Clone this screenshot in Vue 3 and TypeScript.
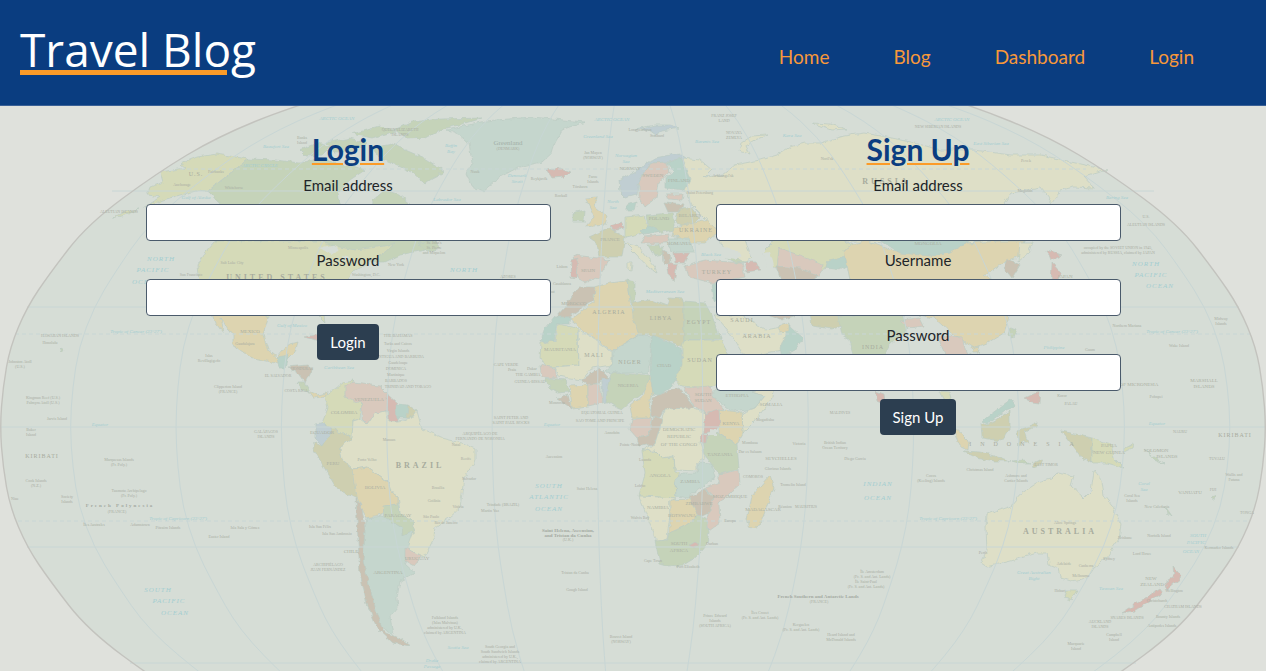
<script setup lang="ts">
import { ref } from 'vue'

interface Field {
  id: string
  label: string
  type: string
}

interface AuthForm {
  title: string
  action: string
  fields: Field[]
}

const links = ['Home', 'Blog', 'Dashboard', 'Login']

const forms: AuthForm[] = [
  {
    title: 'Login',
    action: 'Login',
    fields: [
      { id: 'login-email', label: 'Email address', type: 'email' },
      { id: 'login-password', label: 'Password', type: 'password' },
    ],
  },
  {
    title: 'Sign Up',
    action: 'Sign Up',
    fields: [
      { id: 'signup-email', label: 'Email address', type: 'email' },
      { id: 'signup-username', label: 'Username', type: 'text' },
      { id: 'signup-password', label: 'Password', type: 'password' },
    ],
  },
]

const values = ref<Record<string, string>>({})

// Half-width of the globe at a given distance from the equator.
const profile: [number, number][] = [
  [0, 633], [40, 630], [80, 623], [120, 606], [154, 583], [203, 545],
  [254, 476], [290, 416], [321, 340], [345, 260],
]
const equator = 427
const middle = 633

function edge(ratio: number): [number, number][] {
  const north = profile.map(([d, w]): [number, number] => [middle + ratio * w, equator - d])
  const south = profile.slice(1).map(([d, w]): [number, number] => [middle + ratio * w, equator + d])
  return [...north.reverse(), ...south]
}

// Smooth line through a list of points, using quadratic midpoints.
function smooth(points: [number, number][]): string {
  let d = `M${points[0][0]} ${points[0][1]}`
  for (let i = 1; i < points.length - 1; i++) {
    const [x, y] = points[i]
    const [nx, ny] = points[i + 1]
    d += `Q${x} ${y} ${(x + nx) / 2} ${(y + ny) / 2}`
  }
  const last = points[points.length - 1]
  return d + `L${last[0]} ${last[1]}`
}

const globe = smooth(edge(-1)) + smooth(edge(1).reverse()).replace('M', 'L') + 'Z'
const meridians = Array.from({ length: 12 }, (_, k) => smooth(edge((70 + k * 105.5 - middle) / middle)))

const green = '#c5d3b9'
const lime = '#d5dab8'
const cream = '#dedfc7'
const sand = '#ddd4b0'
const pink = '#d9c9bd'
const teal = '#b9d2c8'
const mist = '#c5d6cd'
const brown = '#cac2b3'
const olive = '#cecfb0'
const red = '#d6bab2'
const blue = '#c0ced2'

const lands: [string, string][] = [
  [lime, '180,164 197,157 217,154 248,159 208,191 222,203 216,200 210,192 200,190 180,195 163,200 143,208 160,197 147,195 150,187 163,182 160,172 173,170 185,168'],
  [lime, '140,209 128,214 112,218 124,212'],
  [green, '248,159 275,160 300,163 320,158 335,163 350,165 365,170 350,180 338,192 340,205 355,212 362,222 372,215 373,200 385,190 400,195 412,205 425,220 430,235 438,243 425,250 400,255 385,262 365,262 345,250 320,243 217,243 213,228 215,215 220,204 208,191'],
  [green, '300,150 318,143 330,147 322,155 306,156'],
  [green, '326,143 350,138 366,143 352,152 334,152'],
  [green, '352,134 380,126 396,131 372,138'],
  [green, '395,130 412,122 440,119 482,118 462,124 440,130 425,138 408,139'],
  [green, '372,148 392,144 410,152 424,158 440,168 445,172 430,180 425,184 412,172 396,165 380,158'],
  [green, '418,243 436,241 440,248 428,252'],
  [mist, '447,130 485,121 532,117 585,122 562,130 555,143 552,153 542,162 519,167 500,177 482,192 472,187 466,173 472,163 469,143 459,135'],
  [red, '547,170 560,168 570,172 565,177 552,178'],
  [lime, '215,241 320,241 335,246 355,250 385,246 395,243 385,252 370,262 352,272 348,282 335,297 322,305 325,322 318,315 305,305 285,305 268,318 255,310 235,305 207,303 200,285 198,265 205,252'],
  [sand, '208,304 235,305 255,310 268,318 263,335 268,350 277,357 287,345 298,342 295,352 285,362 275,363 250,357 233,345 233,335 220,318 223,333 215,322'],
  [teal, '277,357 289,355 286,368 279,368'],
  [brown, '288,367 308,365 312,368 305,383 297,372'],
  [green, '297,382 304,382 310,391 303,390'],
  [sand, '309,391 318,395 326,393 327,397 314,398'],
  [red, '303,337 317,335 335,343 325,342 312,339'],
  [green, '338,346 349,345 358,349 346,350'],
  [lime, '343,383 353,381 345,394 362,404 360,419 353,421 352,438 333,428 322,423 328,408 325,396'],
  [pink, '345,386 353,383 380,386 388,394 387,411 375,413 367,424 362,419 362,404 345,397'],
  [red, '387,394 397,403 397,421 388,421'],
  [teal, '396,404 408,405 407,418 397,418'],
  [olive, '408,405 417,411 412,418 407,418'],
  [blue, '315,424 322,423 333,428 322,446 315,439'],
  [olive, '333,428 352,438 340,448 342,459 353,469 358,478 357,499 337,489 328,474 313,448 315,443 322,446'],
  [cream, '353,421 360,419 367,424 375,413 387,411 388,421 397,421 412,418 417,411 422,429 442,438 462,443 475,449 475,461 464,478 460,508 449,518 435,528 434,538 424,558 405,548 413,531 413,521 400,513 398,496 390,491 387,481 368,467 353,469 342,459 340,448 352,438'],
  [sand, '353,469 368,467 387,481 390,491 398,496 398,504 385,506 383,514 367,518 357,498'],
  [green, '383,506 398,504 400,513 413,521 415,533 402,537 402,528 385,518'],
  [mist, '367,518 383,516 402,528 402,536 413,531 407,548 405,564 415,573 400,581 397,598 398,608 390,618 393,634 377,626 370,594 363,561 365,528'],
  [brown, '356,498 362,508 365,528 363,561 370,588 377,614 383,631 400,639 410,646 393,643 377,628 367,604 360,574 358,541'],
  [pink, '405,548 422,556 414,566 405,561'],
  [brown, '579,287 595,287 594,300 569,317 555,318 565,307 572,295'],
  [teal, '555,317 570,317 569,324 557,324 554,341 541,342 544,330'],
  [sand, '595,287 609,283 627,281 629,297 633,313 639,335 612,351 570,320 594,302'],
  [green, '627,280 635,282 635,297 633,305 629,297'],
  [olive, '633,303 650,300 667,306 669,298 684,299 684,347 652,335 639,335 633,318'],
  [green, '684,301 705,303 712,316 721,339 684,340'],
  [lime, '558,324 577,328 579,365 547,367 540,357 541,343 555,341'],
  [cream, '578,328 612,352 612,365 592,368 582,380 569,378 559,376 555,367 579,365'],
  [mist, '613,351 639,335 652,337 650,363 647,373 615,373 604,372 612,365'],
  [teal, '652,335 681,348 682,367 672,387 660,395 652,394 650,370'],
  [lime, '684,340 721,340 730,357 716,385 705,388 682,386 675,380 682,365 682,347'],
  [pink, '540,365 555,368 557,378 542,377'],
  [green, '545,378 566,380 569,392 557,393 550,388'],
  [brown, '582,380 599,368 609,378 589,386'],
  [sand, '570,386 588,385 588,406 572,408'],
  [brown, '557,398 568,394 572,409'],
  [pink, '588,384 599,384 602,403 588,406'],
  [blue, '602,378 610,378 606,402 602,403'],
  [green, '611,373 649,375 649,388 640,395 630,403 622,410 617,408 606,401 608,385'],
  [sand, '650,376 653,394 649,401 652,418 632,418 630,406 644,394'],
  [brown, '652,398 669,391 679,388 694,406 692,409 664,409 659,418 652,416'],
  [pink, '684,388 709,386 715,398 724,409 705,413 694,406'],
  [mist, '715,392 730,378 745,382 752,392 765,396 755,408 742,411 730,410 714,397'],
  [teal, '730,366 742,372 750,382 742,381 730,378'],
  [cream, '752,392 774,384 772,398 755,421 743,433 742,413 755,408 765,396'],
  [sand, '719,409 742,413 743,433 737,444 719,433'],
  [red, '705,413 719,409 720,425 715,431 703,433'],
  [pink, '632,419 652,418 649,434 637,438 630,430'],
  [brown, '654,416 662,419 655,444 639,446 637,438 649,434'],
  [cream, '664,409 692,408 705,413 704,431 700,444 705,458 697,463 697,471 675,470 674,456 662,458 654,450 642,450 655,444 660,428'],
  [lime, '642,450 655,451 662,458 674,457 675,472 680,473 675,481 676,498 639,496 645,474'],
  [mist, '675,479 682,473 697,473 699,463 712,464 715,478 695,491 689,498 676,496'],
  [green, '707,436 719,433 737,444 739,469 719,474 704,454 702,441'],
  [red, '702,434 707,434 706,443 700,443'],
  [pink, '719,474 739,470 740,484 719,503 720,523 709,531 707,518 712,494 704,489 719,483'],
  [brown, '689,498 704,489 713,496 711,511 700,516 690,508'],
  [cream, '639,496 677,498 670,501 670,514 667,539 657,542 649,521'],
  [sand, '670,500 689,499 699,516 685,526 670,534'],
  [green, '655,541 667,540 669,533 685,526 699,516 706,518 709,533 707,544 695,558 685,564 667,565 660,563'],
  [red, '690,545 695,542 699,544 694,548'],
  [sand, '770,476 774,488 759,526 750,528 747,519 752,496'],
  [blue, '619,180 635,172 655,158 679,153 685,157 669,162 652,163 639,180 637,195 625,198 620,193'],
  [pink, '639,180 652,163 667,162 669,172 659,183 657,197 645,207 639,197'],
  [teal, '667,163 682,158 690,182 685,190 665,188 665,178 674,172'],
  [blue, '635,129 655,125 669,125 679,128 662,131 655,135 648,130'],
  [sand, '585,198 597,197 595,207 607,217 605,225 585,227 594,217'],
  [green, '572,213 585,210 584,222 572,222'],
  [teal, '627,204 637,201 635,211 627,211'],
  [olive, '589,237 609,228 625,237 622,257 599,257 597,243'],
  [pink, '574,255 599,258 609,260 599,277 585,282 577,278'],
  [red, '572,260 578,258 576,278 571,277'],
  [lime, '625,217 645,215 649,232 625,237'],
  [red, '610,226 622,222 624,228 614,231'],
  [green, '647,215 672,213 675,230 655,233 649,227'],
  [teal, '640,230 655,225 660,232 645,235'],
  [pink, '644,237 670,234 666,243 640,243'],
  [brown, '664,203 684,205 682,212 668,212'],
  [pink, '666,194 683,194 682,200 668,199'],
  [olive, '679,210 692,207 700,218 689,227 675,223'],
  [sand, '674,227 709,220 717,233 705,243 689,243 672,235'],
  [mist, '667,238 689,238 694,252 672,252'],
  [red, '674,253 690,253 685,263 675,263'],
  [green, '648,245 660,244 664,254 654,256'],
  [brown, '662,250 670,254 671,265 663,262'],
  [red, '667,263 677,265 674,282 669,275'],
  [cream, '625,243 639,247 655,267 657,273 649,268 635,253'],
  [cream, '628,262 632,262 631,272 628,271'],
  [pink, '685,265 705,260 742,263 745,277 712,283 689,277'],
  [green, '726,257 742,257 748,262 736,263'],
  [red, '744,262 756,262 760,270 746,272'],
  [teal, '712,284 722,281 724,300 714,300'],
  [cream, '682,158 700,160 712,170 705,177 722,175 735,165 760,160 777,155 790,147 805,143 820,143 844,136 864,133 887,137 911,142 941,150 974,150 1011,155 1041,155 1071,162 1107,170 1084,177 1094,188 1074,187 1061,190 1052,203 1041,188 1011,193 1004,203 1020,225 1017,241 980,243 900,243 850,242 800,240 765,237 745,240 752,258 745,262 722,250 717,232 705,218 692,205 685,190 690,180'],
  [cream, '739,151 741,143 752,136 768,135 756,140 746,146 750,154'],
  [cream, '812,123 830,124 846,129 832,130'],
  [lime, '762,253 775,240 800,238 844,240 860,250 850,262 820,270 790,262 775,268'],
  [pink, '779,248 800,255 822,265 820,277 790,280 777,270'],
  [brown, '776,266 800,268 818,276 808,284 782,284'],
  [teal, '828,260 846,256 854,262 840,270 826,268'],
  [brown, '745,280 775,284 806,284 806,312 782,320 760,310'],
  [cream, '714,315 742,315 765,330 790,325 782,350 745,357 735,340'],
  [teal, '789,325 803,338 795,350 782,357 780,348'],
  [sand, '778,326 789,323 789,331 780,332'],
  [olive, '810,312 842,312 846,324 832,329 812,326'],
  [green, '838,316 900,312 910,327 890,345 880,362 874,385 864,388 856,362 850,340 842,335'],
  [sand, '844,250 865,240 890,250 930,255 967,243 1000,241 1025,241 1020,256 1005,262 992,270 984,275 1000,285 1009,316 1004,333 987,343 974,348 951,333 934,318 900,312 870,300 850,280'],
  [teal, '880,240 972,240 950,252 930,256 900,253'],
  [cream, '1020,243 1032,243 1028,254 1018,262'],
  [brown, '1007,258 1020,265 1012,278 1004,268'],
  [red, '1047,250 1062,255 1051,260'],
  [red, '1052,263 1061,273 1057,282 1051,284'],
  [pink, '900,320 920,318 924,326 908,328'],
  [pink, '937,335 962,337 966,352 980,360 972,370 955,366 944,352'],
  [green, '1011,328 1016,330 1013,338 1009,335'],
  [sand, '972,348 980,346 978,352 973,352'],
  [red, '876,391 884,394 885,403 877,400'],
  [lime, '940,391 950,392 952,399 944,399'],
  [sand, '950,424 962,434 969,441 968,450 960,446'],
  [teal, '982,421 1011,399 1016,406 1004,411 987,424'],
  [olive, '981,423 987,425 1010,411 1010,428 1001,441 982,438'],
  [olive, '964,451 980,452 994,456 1011,461 994,461 976,457'],
  [olive, '1017,431 1037,423 1036,427 1024,431 1029,444 1023,439 1019,448'],
  [olive, '1032,464 1042,459 1039,466 1033,468'],
  [green, '1012,461 1024,460 1030,463 1018,463'],
  [red, '1025,398 1040,391 1039,403 1032,402'],
  [olive, '1061,431 1071,433 1092,438 1092,463 1082,458 1071,443'],
  [lime, '1092,438 1111,444 1114,458 1124,468 1107,463 1092,463'],
  [lime, '1122,450 1133,444 1132,448 1124,452'],
  [green, '1144,449 1152,456 1164,464 1154,460'],
  [green, '1165,506 1172,516 1168,513'],
  [cream, '987,514 1011,506 1022,493 1037,483 1051,479 1057,473 1074,476 1071,486 1084,498 1091,491 1094,471 1102,481 1104,496 1112,506 1121,524 1119,539 1106,558 1094,568 1087,578 1071,581 1061,578 1059,568 1049,564 1047,553 1037,553 1011,561 987,567 981,563 987,551 986,528'],
  [lime, '1066,590 1077,590 1071,600 1064,598'],
  [red, '1173,566 1182,577 1168,589 1165,583 1174,577'],
  [red, '1159,589 1162,593 1134,611 1122,613'],
  [green, '60,347 64,350 62,353'],
  [green, '1211,498 1216,496 1215,501'],
]

type Spot = [number, number, string]

const countries: Spot[] = [
  [250, 333, 'MEXICO'], [369, 401, 'VENEZUELA'], [344, 414, 'COLOMBIA'], [333, 465, 'PERU'],
  [375, 489, 'BOLIVIA'], [398, 517, 'PARAGUAY'], [388, 574, 'ARGENTINA'], [351, 553, 'CHILE'],
  [417, 560, 'URUGUAY'], [322, 434, 'ECUADOR'], [574, 305, 'MOROCCO'], [560, 351, 'MAURITANIA'],
  [664, 367, 'CHAD'], [628, 387, 'NIGERIA'], [703, 396, 'SOUTH'], [703, 402, 'SUDAN'],
  [737, 397, 'ETHIOPIA'], [771, 406, 'SOMALIA'], [731, 425, 'KENYA'], [679, 431, 'DEMOCRATIC'],
  [679, 438, 'REPUBLIC'], [679, 446, 'OF THE CONGO'], [720, 456, 'TANZANIA'], [660, 477, 'ANGOLA'],
  [690, 483, 'ZAMBIA'], [699, 505, 'ZIMBABWE'], [658, 509, 'NAMIBIA'], [682, 517, 'BOTSWANA'],
  [679, 545, 'SOUTH'], [679, 552, 'AFRICA'], [730, 498, 'MOZAMBIQUE'], [763, 511, 'MADAGASCAR'],
  [781, 460, 'SEYCHELLES'], [588, 272, 'SPAIN'], [610, 241, 'FRANCE'], [653, 177, 'SWEDEN'],
  [630, 170, 'NORWAY'], [679, 182, 'FINLAND'], [659, 220, 'POLAND'], [690, 217, 'BELARUS'],
  [679, 245, 'ROMANIA'], [1065, 278, 'JAPAN'], [1109, 447, 'PAPUA'], [1109, 454, 'NEW GUINEA'],
  [1156, 452, 'SOLOMON'], [1167, 458, 'ISLANDS'], [1190, 494, 'VANUATU'], [1151, 580, 'NEW'],
  [1152, 586, 'ZEALAND'], [928, 245, 'MONGOLIA'], [1139, 386, 'OF MICRONESIA'],
  [1204, 382, 'MARSHALL'], [1204, 388, 'ISLANDS'],
]

const spaced: Spot[] = [
  [609, 314, 'ALGERIA'], [661, 320, 'LIBYA'], [594, 357, 'MALI'], [630, 364, 'NIGER'],
  [700, 362, 'SUDAN'], [696, 232, 'UKRAINE'], [717, 274, 'TURKEY'], [873, 349, 'INDIA'],
  [42, 458, 'KIRIBATI'], [1235, 437, 'KIRIBATI'], [196, 176, 'U.S.'], [699, 324, 'EGYPT'],
  [742, 322, 'SAUDI'], [757, 338, 'ARABIA'],
]

const wide: Spot[] = [
  [277, 280, 'UNITED STATES'], [420, 468, 'BRAZIL'], [886, 184, 'RUSSIA'], [1060, 534, 'AUSTRALIA'],
]

const oceans: Spot[] = [
  [161, 261, 'NORTH'], [153, 272, 'PACIFIC'], [146, 284, 'OCEAN'], [158, 592, 'SOUTH'],
  [169, 603, 'PACIFIC'], [175, 615, 'OCEAN'], [549, 488, 'SOUTH'], [549, 499, 'ATLANTIC'],
  [549, 511, 'OCEAN'], [878, 486, 'INDIAN'], [878, 500, 'OCEAN'], [1146, 266, 'NORTH'],
  [1151, 277, 'PACIFIC'], [1160, 288, 'OCEAN'], [464, 272, 'NORTH'],
]

const seas: Spot[] = [
  [337, 120, 'ARCTIC OCEAN'], [612, 121, 'ARCTIC OCEAN'], [952, 121, 'ARCTIC OCEAN'],
  [276, 148, 'Beaufort Sea'], [451, 147, 'Baffin'], [451, 153, 'Bay'], [598, 138, 'Greenland Sea'],
  [626, 157, 'Norwegian'], [626, 163, 'Sea'], [707, 143, 'Barents Sea'], [792, 137, 'Kara Sea'],
  [991, 145, 'East Siberian Sea'], [1117, 199, 'Bering Sea'], [136, 333, 'Tropic of Cancer (23°27\')'],
  [1172, 333, 'Tropic of Cancer (23°27\')'], [178, 520, 'Tropic of Capricorn (23°27\')'],
  [948, 520, 'Tropic of Capricorn (23°27\')'], [100, 426, 'Equator'], [552, 426, 'Equator'],
  [1157, 425, 'Equator'], [711, 256, 'Black Sea'], [665, 293, 'Mediterranean Sea'],
  [292, 327, 'Gulf of Mexico'], [339, 369, 'Caribbean Sea'], [1054, 349, 'Philippine'],
  [1198, 537, 'SOUTH'], [1196, 544, 'PACIFIC'], [1191, 553, 'OCEAN'], [1034, 574, 'Great Australian'],
  [1034, 580, 'Bight'], [1111, 590, 'Tasman Sea'], [1144, 485, 'Coral'], [1144, 491, 'Sea'],
  [458, 649, 'Scotia Sea'], [432, 662, 'Drake'], [432, 668, 'Passage'], [260, 167, 'ARCTIC CIRCLE'],
  [517, 177, 'Denmark'], [517, 183, 'Strait'], [447, 201, 'Labrador Sea'],
  [196, 199, 'Gulf of Alaska'], [613, 203, 'North'], [613, 209, 'Sea'],
]

const places: Spot[] = [
  [508, 150, '(DENMARK)'], [119, 213, 'ALEUTIAN ISLANDS'], [60, 337, 'HAWAIIAN ISLANDS'],
  [50, 344, 'Honolulu'], [20, 363, 'Johnston Atoll'], [20, 368, '(U.S.)'], [43, 399, 'Kingman Reef (U.S.)'],
  [43, 404, 'Palmyra Atoll (U.S.)'], [57, 420, 'Jarvis Island'], [31, 431, 'Baker'],
  [31, 436, 'Island'], [119, 461, 'Marquesas Islands'], [119, 466, '(Fr. Poly.)'], [36, 482, 'Cook Islands'],
  [36, 487, '(N.Z.)'], [15, 500, 'Niue'], [67, 498, 'Society'], [67, 503, 'Islands'],
  [129, 492, 'Tuamotu Archipelago'], [129, 497, '(Fr. Poly.)'], [117, 513, '(FRANCE)'],
  [94, 526, 'Îles Australes'], [140, 526, 'Adamstown'], [168, 529, 'Pitcairn Islands'],
  [245, 529, 'Isla Sala y Gómez'], [219, 538, 'Easter Island'], [320, 528, 'Isla San Félix'],
  [337, 535, 'Isla San Ambrosio'], [228, 388, 'Clipperton Island'], [228, 393, '(FRANCE)'],
  [266, 433, 'GALÁPAGOS'], [266, 438, 'ISLANDS'], [328, 566, 'ARCHIPIÉLAGO'],
  [328, 571, 'JUAN FERNÁNDEZ'], [209, 357, 'Islas'], [209, 362, 'Revillagigedo'],
  [296, 392, 'COSTA RICA'], [278, 377, 'EL SALVADOR'], [302, 370, 'HONDURAS'], [398, 337, 'THE BAHAMAS'],
  [398, 345, 'Turks and Caicos'], [398, 352, 'Virgin Islands'], [400, 358, 'ANTIGUA AND BARBUDA'],
  [398, 364, 'Guadeloupe'], [396, 370, 'DOMINICA'], [396, 376, 'Martinique'], [396, 382, 'BARBADOS'],
  [408, 388, 'TRINIDAD AND TOBAGO'], [389, 441, 'Manaus'], [367, 461, 'Porto Velho'],
  [438, 489, 'Brasília'], [434, 502, 'Goiânia'], [458, 508, 'Vitória'], [431, 518, 'São Paulo'],
  [446, 524, 'Rio de Janeiro'], [466, 460, 'Recife'], [469, 480, 'Salvador'], [456, 446, 'Natal'],
  [480, 435, 'ARQUIPÉLAGO DE'], [480, 440, 'FERNANDO DE NORONHA'], [511, 419, 'SAINT PETER AND'],
  [511, 424, 'SAINT PAUL ROCKS'], [554, 458, 'Ascension'], [587, 490, 'Saint Helena'],
  [503, 506, 'Trindade (BRAZIL)'], [490, 512, 'Martin Vaz'], [568, 541, '(U.K.)'],
  [575, 574, 'Tristan da Cunha'], [577, 591, 'Gough Island'], [445, 619, 'Falkland Islands'],
  [445, 624, '(Islas Malvinas)'], [445, 629, 'administered by U.K.,'], [445, 634, 'claimed by ARGENTINA'],
  [500, 648, 'South Georgia and'], [500, 653, 'South Sandwich Islands'],
  [500, 658, 'administered by U.K.,'], [500, 663, 'claimed by ARGENTINA'], [621, 638, 'Bouvet Island'],
  [621, 643, '(NORWAY)'], [715, 617, 'Prince Edward'], [715, 622, 'Islands'],
  [715, 627, '(SOUTH AFRICA)'], [760, 614, 'Îles Crozet'], [760, 619, '(Fr. S. and Ant. Lands)'],
  [801, 626, 'Kerguelen'], [801, 631, '(Fr. S. and Ant. Lands)'], [841, 636, 'Heard Island and'],
  [841, 641, 'McDonald Islands'], [819, 603, '(FRANCE)'], [872, 573, 'Île Amsterdam'],
  [872, 578, '(Fr. S. and Ant. Lands)'], [866, 583, 'Île Saint-Paul'], [866, 588, '(Fr. S. and Ant. Lands)'],
  [653, 562, 'Cape Town'], [688, 568, 'Port Elizabeth'], [712, 545, 'Durban'], [640, 519, 'Walvis Bay'],
  [640, 487, 'Lobito'], [645, 461, 'Luanda'], [630, 446, 'Pointe-Noire'], [612, 434, 'Annobón'],
  [602, 414, 'EQUATORIAL GUINEA'], [600, 422, 'SAO TOME AND PRINCIPE'], [506, 366, 'CAPE VERDE'],
  [512, 371, 'Praia'], [532, 370, 'Dakar'], [528, 376, 'THE GAMBIA'], [530, 383, 'GUINEA-BISSAU'],
  [557, 404, 'Monrovia'], [730, 522, 'Europa'], [750, 444, 'Mombasa'], [750, 453, 'Dar es Salaam'],
  [765, 421, 'Mogadishu'], [799, 445, 'Victoria'], [778, 470, 'Glorioso Islands'], [753, 478, 'COMOROS'],
  [793, 486, 'Tromelin Island'], [785, 508, 'Réunion'], [806, 508, 'MAURITIUS'], [835, 444, 'British Indian'],
  [835, 449, 'Ocean Territory'], [840, 414, 'MALDIVES'], [855, 460, 'Diego Garcia'],
  [931, 477, 'Cocos'], [931, 482, '(Keeling) Islands'], [980, 471, 'Christmas Island'],
  [1016, 477, 'Ashmore and'], [1016, 482, 'Cartier Islands'], [1046, 466, 'EAST TIMOR'],
  [1065, 524, 'Alice Springs'], [983, 554, 'Perth'], [1064, 565, 'Adelaide'], [1086, 567, 'Canberra'],
  [1109, 560, 'Sydney'], [1081, 577, 'Melbourne'], [1060, 592, 'Hobart'], [1125, 539, 'Brisbane'],
  [1132, 497, 'Coral Sea'], [1132, 502, 'Islands'], [1157, 508, 'New Caledonia'], [1159, 537, 'Norfolk Island'],
  [1142, 555, 'Lord Howe'], [1174, 592, 'Wellington'], [1157, 602, 'Christchurch'], [1183, 608, 'CHATHAM ISLANDS'],
  [1127, 619, 'SNARES ISLANDS'], [1168, 618, 'Bounty Islands'], [1162, 627, 'Antipodes Islands'],
  [1100, 623, 'AUCKLAND'], [1100, 628, 'ISLANDS'], [1114, 636, 'Campbell'], [1114, 641, 'Island'],
  [1076, 645, 'Macquarie'], [1076, 650, 'Island'], [1213, 491, 'FIJI'], [1234, 476, 'Wallis and'],
  [1234, 481, 'Futuna'], [1247, 514, 'TONGA'], [1217, 460, 'TUVALU'], [1219, 549, 'Kermadec Islands'],
  [1180, 433, 'NAURU'], [1156, 398, 'Pohnpei'], [1062, 397, 'Koror'], [1071, 405, 'PALAU'],
  [1127, 327, 'Northern Mariana'], [1090, 351, 'Guam'], [1179, 347, 'Wake Island'], [1221, 320, 'Midway'],
  [1221, 325, 'Islands'], [1118, 249, 'occupied by the SOVIET UNION in 1945,'],
  [1118, 254, 'administered by RUSSIA, claimed by JAPAN'], [1146, 218, 'U.S.'], [1146, 226, 'ALEUTIAN ISLANDS'],
  [938, 128, 'NEW SIBERIAN ISLANDS'], [724, 117, 'FRANZ JOSEF'], [724, 122, 'LAND'], [734, 134, 'NOVAYA'],
  [734, 139, 'ZEMLYA'], [657, 137, 'Svalbard'], [640, 131, 'Longyearbyen'], [593, 154, 'Jan Mayen'],
  [593, 159, '(NORWAY)'], [539, 180, 'Reykjavík'], [593, 178, 'Faroe'], [593, 183, 'Islands'],
  [580, 188, 'Tórshavn'], [561, 197, 'Rockall'], [700, 194, 'Saint Petersburg'], [723, 177, 'Arkhangel\'sk'],
  [827, 160, 'Noril\'sk'], [1026, 162, 'Pevek'], [1025, 192, 'Magadan'], [400, 131, 'QUEEN ELIZABETH'],
  [400, 136, 'ISLANDS'], [302, 139, 'Banks'], [302, 144, 'Island'], [216, 173, 'Fairbanks'],
  [182, 186, 'Anchorage'], [234, 189, 'Whitehorse'], [475, 173, 'Nuuk'], [434, 244, 'St. John\'s'],
  [434, 249, 'St. Pierre'], [434, 254, 'and Miquelon'], [191, 276, 'San Francisco'], [232, 264, 'Salt Lake City'],
  [298, 249, 'Minneapolis'], [366, 276, 'Washington, D.C.'], [396, 266, 'New York'], [245, 345, 'Guadalajara'],
  [508, 278, 'AZORES'], [550, 293, 'Rabat'], [562, 285, 'Casablanca'], [562, 268, 'Lisbon'],
]

const groups: { kind: string; spots: Spot[] }[] = [
  { kind: 'country', spots: countries },
  { kind: 'spaced', spots: spaced },
  { kind: 'wide', spots: wide },
  { kind: 'scattered', spots: [[1026, 446, 'INDONESIA']] },
  { kind: 'ocean', spots: oceans },
  { kind: 'sea', spots: seas },
  { kind: 'place', spots: places },
  { kind: 'greenland', spots: [[508, 145, 'Greenland']] },
  { kind: 'polynesia', spots: [[120, 507, 'French Polynesia']] },
  {
    kind: 'territory',
    spots: [
      [818, 598, 'French Southern and Antarctic Lands'],
      [568, 532, 'Saint Helena, Ascension,'],
      [568, 537, 'and Tristan da Cunha'],
    ],
  },
]
</script>

<template>
  <div class="page">
    <header class="header">
      <h1 class="brand">Travel Blog</h1>
      <nav class="nav">
        <a v-for="link in links" :key="link" href="#">{{ link }}</a>
      </nav>
    </header>

    <main class="main">
      <svg class="map" viewBox="0 106 1266 565" preserveAspectRatio="xMidYMin slice" aria-hidden="true">
        <defs>
          <filter id="coast" x="0" y="0" width="100%" height="100%">
            <feTurbulence type="fractalNoise" baseFrequency="0.16" numOctaves="2" seed="4" result="noise" />
            <feDisplacementMap in="SourceGraphic" in2="noise" scale="5" xChannelSelector="R" yChannelSelector="G" />
          </filter>
        </defs>
        <path class="globe" :d="globe" />
        <g filter="url(#coast)">
          <polygon v-for="(land, i) in lands" :key="i" class="land" :fill="land[0]" :points="land[1]" />
          <path class="lake" d="M712 247l10 0 12 3 8 5-6 4-14-2-10 3-6-4z M762 252l8-1 3 10 3 14-6 3-4-12z M710 428l6 1 0 7-6 0z M318 248l14-3 8 5-8 4z M342 256l9 2-6 4z" />
        </g>
        <g class="lines">
          <path v-for="(line, i) in meridians" :key="i" :d="line" />
          <path d="M112 191H1154M27 307H1239M1 427H1265M27 547H1239M130 663H1136" />
          <path class="tropic" d="M180 169H1086M15 334H1251M18 521H1248" />
        </g>
        <path class="rim" :d="globe" />
        <g v-for="group in groups" :key="group.kind" :class="group.kind">
          <text v-for="(spot, i) in group.spots" :key="i" :x="spot[0]" :y="spot[1]">{{ spot[2] }}</text>
        </g>
      </svg>

      <div class="forms">
        <form v-for="form in forms" :key="form.title" class="form" @submit.prevent>
          <h2>{{ form.title }}</h2>
          <div v-for="field in form.fields" :key="field.id" class="field">
            <label :for="field.id">{{ field.label }}</label>
            <input :id="field.id" v-model="values[field.id]" :type="field.type" />
          </div>
          <button type="submit">{{ form.action }}</button>
        </form>
      </div>
    </main>
  </div>
</template>

<style>
body {
  margin: 0;
}
</style>

<style scoped>
.page {
  display: flex;
  flex-direction: column;
  min-height: 100vh;
  background: #dfe1dc;
  color: #212529;
  font-family: Lato, "Liberation Sans", sans-serif;
  font-size: 15px;
  line-height: 24px;
}

.header {
  display: flex;
  align-items: center;
  justify-content: space-between;
  box-sizing: border-box;
  min-height: 106px;
  padding: 0 72px 0 20px;
  border-bottom: 1px solid #3a6096;
  background: #0a3d80;
}

.brand {
  margin: 0 0 8px;
  color: #fff;
  font-family: "Trebuchet MS", "Open Sans", sans-serif;
  font-size: 46px;
  font-weight: 400;
  line-height: 56px;
  text-decoration: underline #fb9b28 5px;
  text-underline-offset: 3px;
}

.nav {
  display: flex;
  gap: 64px;
  margin-top: 8px;
}

.nav a {
  color: #f7983a;
  font-family: "Gill Sans", "Gill Sans MT", Lato, sans-serif;
  font-size: 19px;
  text-decoration: none;
}

.main {
  position: relative;
  flex: 1;
  overflow: hidden;
}

.map {
  position: absolute;
  inset: 0;
  width: 100%;
  height: 100%;
  font-family: "Liberation Serif", serif;
  text-anchor: middle;
}

.globe {
  fill: #d6ddd6;
}

.rim {
  fill: none;
  stroke: #c3c3be;
  stroke-width: 1.4;
}

.land {
  stroke: #bccbc3;
  stroke-width: 0.7;
  stroke-linejoin: round;
}

.lake {
  fill: #d6ddd6;
}

.lines {
  fill: none;
  stroke: #c8d6d5;
  stroke-width: 1;
}

.tropic {
  stroke-dasharray: 4 3;
}

.place {
  fill: #a9ada3;
  font-size: 4px;
}

.country {
  fill: #abb0a3;
  font-size: 5px;
}

.spaced {
  fill: #a8ac9e;
  font-size: 6px;
  letter-spacing: 1px;
}

.wide {
  fill: #a8ac9e;
  font-size: 8px;
  font-weight: 700;
  letter-spacing: 3px;
}

.scattered {
  fill: #a8ac9e;
  font-size: 6px;
  letter-spacing: 9px;
}

.greenland {
  fill: #a3b0a8;
  font-size: 7px;
}

.polynesia {
  fill: #a4aaa2;
  font-size: 5px;
  font-weight: 700;
  letter-spacing: 2px;
}

.territory {
  fill: #a4aaa2;
  font-size: 5px;
  font-weight: 700;
}

.ocean {
  fill: #a3cdd1;
  font-size: 7px;
  font-style: italic;
  letter-spacing: 1px;
}

.sea {
  fill: #a3cdd1;
  font-size: 5px;
  font-style: italic;
}

.forms {
  position: relative;
  display: grid;
  grid-template-columns: 1fr 1fr;
  max-width: 1140px;
  margin: 0 auto;
  padding-top: 24px;
}

.form {
  display: flex;
  flex-direction: column;
  align-items: center;
  padding: 0 15px;
}

h2 {
  margin: 0 0 5px;
  color: #0a3d80;
  font-size: 30px;
  font-weight: 700;
  line-height: 38px;
  text-decoration: underline #fb9b28 2px;
  text-underline-offset: 2px;
}

.field {
  display: flex;
  flex-direction: column;
  align-items: center;
  gap: 7px;
  width: 75%;
  margin-bottom: 7px;
}

input {
  box-sizing: border-box;
  width: 100%;
  height: 37px;
  padding: 6px 12px;
  border: 1px solid #4a5a6b;
  border-radius: 4px;
  background: #fff;
  color: #495057;
  font: inherit;
}

button {
  margin-top: 1px;
  padding: 6px 13px;
  border: 0;
  border-radius: 4px;
  background: #2c3e50;
  color: #fff;
  font: inherit;
  cursor: pointer;
}
</style>
